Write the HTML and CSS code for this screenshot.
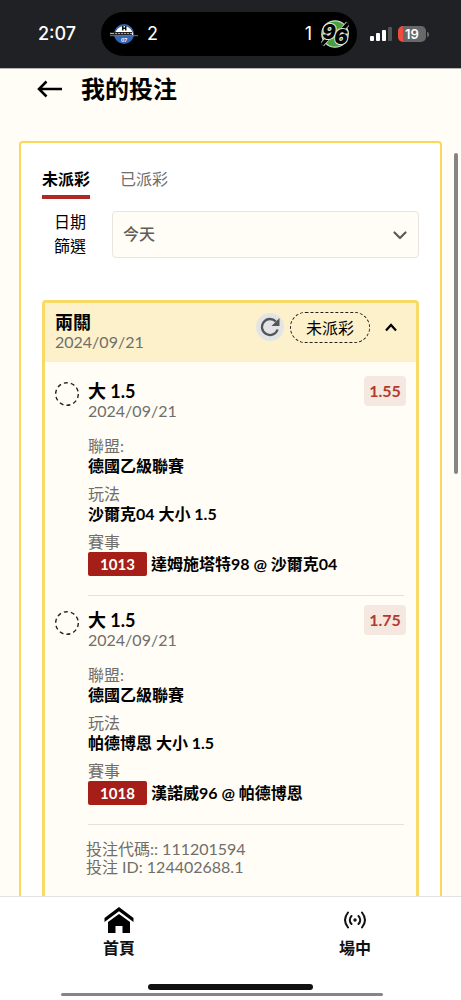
FILE: index.html
```html
<!DOCTYPE html>
<html lang="zh-Hant">
<head>
<meta charset="utf-8">
<meta name="viewport" content="width=device-width, initial-scale=1">
<title>我的投注</title>
<link rel="stylesheet" href="styles.css">
</head>
<body>
<div class="app">
  <div class="status">
    <span class="time">2:07</span>
    <div class="island">
      <svg class="team-home" width="30" height="22" viewBox="0 0 30 22" aria-hidden="true">
        <circle cx="15" cy="11" r="10" fill="#2f66b5"/>
        <path d="M6 12a9 9 0 0 1 18 0z" fill="#fff"/>
        <path d="M13 3h1.500v1.500h1.500v-1.500h1.500v4.500h-1.500v-1.500h-1.500v1.500h-1.500z" fill="#111"/>
        <path d="M1 9h22v3h-22z" fill="#222"/>
        <path d="M1 10.500h4M6 10.500h2M9 10.500h2M12 10.500h2M15 10.500h2M18 10.500h2M21 10.500h2" stroke="#a7a9ad"/>
        <path d="M1 12.700h28" stroke="#777"/>
        <text x="15" y="19" class="crest-year">07</text>
      </svg>
      <span class="score-home">2</span>
      <span class="score-away">1</span>
      <svg width="28" height="28" viewBox="0 0 28 28" aria-hidden="true">
        <circle cx="14" cy="14" r="13.200" fill="#45a03d" stroke="#c9d9c7" stroke-width="1.200"/>
        <path d="M6 19 1 24.500M22 9l5-5.500" stroke="#dfe8dc" stroke-width="5"/>
        <path d="M7 18 1 24.500M21 10l6-6.500" stroke="#000" stroke-width="3.400"/>
        <text x="8" y="19" class="crest-digits">9</text>
        <text x="20" y="24" class="crest-digits">6</text>
      </svg>
    </div>
    <svg class="signal" width="22" height="14" viewBox="0 0 22 14" aria-hidden="true">
      <g fill="#fff"><rect y="9" width="4" height="5" rx="1"/><rect x="6" y="6" width="4" height="8" rx="1"/><rect x="12" y="3" width="4" height="11" rx="1"/></g>
      <rect x="18" width="4" height="14" rx="1" fill="#535456"/>
    </svg>
    <span class="battery">19</span>
    <span class="battery-tip"></span>
  </div>

  <main class="content">
    <header class="page-head">
      <button class="back" type="button" aria-label="返回">
        <svg width="26" height="18" viewBox="0 0 26 18" fill="none" stroke="#000" stroke-width="2.500"><path d="M9.500 1.500 2 9l7.500 7.500M2 9h23"/></svg>
      </button>
      <h1>我的投注</h1>
    </header>

    <section class="panel">
      <div class="tabs" role="tablist">
        <button class="tab active" type="button" role="tab" aria-selected="true">未派彩</button>
        <button class="tab" type="button" role="tab" aria-selected="false">已派彩</button>
      </div>
      <div class="filter">
        <label for="range">日期篩選</label>
        <div class="select-wrap">
          <select id="range"><option>今天</option></select>
          <svg class="caret" width="14" height="9" viewBox="0 0 14 9" fill="none" stroke="#5c5b58" stroke-width="2.200" stroke-linecap="round" stroke-linejoin="round" aria-hidden="true"><path d="M1.500 1.500 7 7l5.500-5.500"/></svg>
        </div>
      </div>

      <article class="slip">
        <header class="slip-head">
          <div class="slip-title">
            <h2>兩關</h2>
            <time>2024/09/21</time>
          </div>
          <button class="refresh" type="button" aria-label="重新整理">
            <svg width="20" height="20" viewBox="0 0 20 20" aria-hidden="true"><path d="M15.800 4.500A8 8 0 1 0 17.600 12.500" fill="none" stroke="#555659" stroke-width="2.300"/><path d="M19.500 1v8h-8z" fill="#555659"/></svg>
          </button>
          <span class="state">未派彩</span>
          <button class="collapse" type="button" aria-label="收合">
            <svg width="12" height="9" viewBox="0 0 12 9" fill="none" stroke="#000" stroke-width="2.200"><path d="M1 7.500 6 2l5 5.500"/></svg>
          </button>
        </header>

        <section class="bet">
          <svg class="ring" width="24" height="24" viewBox="0 0 24 24" aria-hidden="true"><circle cx="12" cy="12" r="11.300"/></svg>
          <div class="bet-body">
            <div class="bet-top">
              <div><h3>大 1.5</h3><time>2024/09/21</time></div>
              <span class="odds">1.55</span>
            </div>
            <dl>
              <div><dt>聯盟:</dt><dd>德國乙級聯賽</dd></div>
              <div><dt>玩法</dt><dd>沙爾克04 大小 1.5</dd></div>
              <div><dt>賽事</dt><dd class="match"><span class="code">1013</span>達姆施塔特98 @ 沙爾克04</dd></div>
            </dl>
          </div>
        </section>

        <section class="bet">
          <svg class="ring" width="24" height="24" viewBox="0 0 24 24" aria-hidden="true"><circle cx="12" cy="12" r="11.300"/></svg>
          <div class="bet-body">
            <div class="bet-top">
              <div><h3>大 1.5</h3><time>2024/09/21</time></div>
              <span class="odds">1.75</span>
            </div>
            <dl>
              <div><dt>聯盟:</dt><dd>德國乙級聯賽</dd></div>
              <div><dt>玩法</dt><dd>帕德博恩 大小 1.5</dd></div>
              <div><dt>賽事</dt><dd class="match"><span class="code">1018</span>漢諾威96 @ 帕德博恩</dd></div>
            </dl>
          </div>
        </section>

        <footer class="ids">
          <p>投注代碼:: 111201594</p>
          <p>投注 ID: 124402688.1</p>
        </footer>
      </article>
    </section>
  </main>

  <nav class="tabbar">
    <a href="#home">
      <svg width="30" height="26" viewBox="0 0 30 26" aria-hidden="true"><path d="M15 0 .5 11v4L15 4.300 29.500 15v-4z"/><path d="M15 7 4 15v11h7.500v-7h7v7H26V15z"/></svg>
      首頁
    </a>
    <a href="#live">
      <svg width="24" height="26" viewBox="0 0 24 26" fill="none" stroke="#111" stroke-width="2" stroke-linecap="round" aria-hidden="true"><circle cx="12" cy="13" r="1.700" fill="#111" stroke="none"/><path d="M8.500 9a5.500 5.500 0 0 0 0 8M15.500 9a5.500 5.500 0 0 1 0 8M5 5.500q-6 7.500 0 15M19 5.500q6 7.500 0 15"/></svg>
      場中
    </a>
  </nav>
  <div class="scroll-y"></div>
  <div class="home-bar"></div>
  <div class="scroll-x"></div>
</div>
</body>
</html>
```
FILE: styles.css
```css
* { box-sizing: border-box; }

body {
  margin: 0;
  background: #fffdf5;
  color: #000;
  font: 16px/20px Lato, "Noto Sans CJK TC", sans-serif;
}

h1, h2, h3, p, dl, dd { margin: 0; }

button {
  padding: 0;
  border: 0;
  background: none;
  color: inherit;
  font: inherit;
}

svg { display: block; flex: none; }

time, dt { display: block; color: #6f6e6b; }

.app {
  position: relative;
  display: flex;
  flex-direction: column;
  height: 100vh;
  overflow: hidden;
}

/* Status bar */
.status {
  display: flex;
  flex: none;
  align-items: center;
  height: 69px;
  padding: 0 32px 0 38px;
  border-bottom: 1px solid #b5b5b3;
  background: #202124;
  color: #fff;
  font-family: Inter, sans-serif;
  font-size: 18px;
}

.time { width: 63px; font-size: 18px; font-weight: 500; }

.island {
  display: flex;
  flex: 1;
  align-items: center;
  height: 44px;
  padding: 0 8px;
  border-radius: 22px;
  background: #000;
}

.score-home { margin-left: 8px; }
.score-away { margin: 0 9px 0 auto; }

.crest-year {
  fill: #fff;
  font: bold 5px Inter, sans-serif;
  text-anchor: middle;
}

.crest-digits {
  fill: #000;
  stroke: #dfe8dc;
  stroke-width: 2px;
  paint-order: stroke;
  font: italic 900 20px Inter, sans-serif;
  text-anchor: middle;
}

.signal { margin: 0 6px 0 13px; }

.battery {
  width: 28px;
  height: 16px;
  border-radius: 5px;
  background: linear-gradient(90deg, #ee4d3e 5px, #67686a 5px);
  font-size: 13px;
  font-weight: 600;
  line-height: 16px;
  text-align: center;
}

.battery-tip {
  width: 2px;
  height: 5px;
  margin-left: 1px;
  border-radius: 0 2px 2px 0;
  background: #67686a;
}

/* Page */
.content { flex: 1; min-height: 0; padding: 0 19px; overflow: hidden; }

.page-head {
  display: flex;
  align-items: center;
  gap: 18px;
  height: 72px;
  padding: 0 18px 32px;
}

h1 { font-size: 24px; font-weight: 700; line-height: 36px; }

.panel {
  padding: 24px 21px;
  border: 2px solid #fad85b;
  border-radius: 4px;
  background: #fff;
}

.tabs { display: flex; gap: 30px; }

.tab {
  padding-bottom: 4px;
  border-bottom: 4px solid transparent;
  color: #6f6e6b;
  line-height: 24px;
}

.tab.active { border-color: #b02822; color: #000; font-weight: 700; }

.filter {
  display: flex;
  align-items: center;
  gap: 26px;
  margin: 11px 0 42px;
  padding-left: 12px;
}

.filter label { width: 32px; flex: none; line-height: 24px; }

.select-wrap { position: relative; flex: 1; }

select {
  display: block;
  width: 100%;
  height: 47px;
  padding: 0 10px;
  border: 1px solid #e8e5df;
  border-radius: 4px;
  background: #fffdf5;
  color: #5f5e5b;
  font: inherit;
  font-weight: 500;
  appearance: none;
}

.caret { position: absolute; top: 20px; right: 12px; pointer-events: none; }

/* Bet slip */
.slip {
  border: 3px solid #f9da66;
  border-radius: 4px;
  background: #fffdf5;
}

.slip-head {
  display: flex;
  align-items: flex-start;
  height: 59px;
  padding: 9px 19px 0 10px;
  background: #fcf1cb;
}

.slip-title { flex: 1; }

h2, h3 { font-size: 18px; font-weight: 700; line-height: 20px; }

.refresh {
  display: grid;
  place-items: center;
  width: 28px;
  height: 28px;
  margin: 1px 6px 0 0;
  border-radius: 50%;
  background: #e3e4e6;
}

.state {
  padding: 0 15px;
  border: 1px dashed #222;
  border-radius: 16px;
  line-height: 29px;
}

.collapse { margin: 11px 0 0 15px; }

.bet { display: flex; gap: 9px; padding: 14px 12px 0 10px; }
.slip-head + .bet { padding-top: 19px; }

.ring { margin-top: 1px; fill: none; stroke: #222; stroke-width: 1.4; stroke-dasharray: 4 3.1; }

.bet-body { flex: 1; padding-bottom: 19px; border-bottom: 1px solid #e5e2dd; }

.bet-top { display: flex; justify-content: space-between; margin-bottom: 15px; }

.odds {
  width: 42px;
  height: 30px;
  margin: -5px -2px 0 0;
  border-radius: 4px;
  background: #f5e8e1;
  color: #b23a2e;
  font-weight: 700;
  line-height: 30px;
  text-align: center;
}

dl { display: grid; gap: 8px; }
dd { font-weight: 700; }

.match { display: flex; align-items: center; gap: 4px; line-height: 24px; }

.code {
  width: 59px;
  border-radius: 2px;
  background: #a51f18;
  color: #fff;
  font-size: 15px;
  text-align: center;
}

.ids { padding: 15px 41px 30px; color: #6f6e6b; line-height: 18px; }

/* Bottom navigation */
.tabbar {
  display: flex;
  flex: none;
  gap: 2px;
  height: 104px;
  padding: 10px 0 0 2px;
  overflow: hidden;
  border-top: 1px solid #e3e3e3;
  background: #fff;
}

.tabbar a {
  display: flex;
  flex: 0 0 51%;
  flex-direction: column;
  align-items: center;
  gap: 5px;
  color: #111;
  font-weight: 700;
  text-decoration: none;
}

/* Overlaid scroll and home indicators */
.scroll-y, .scroll-x, .home-bar { position: absolute; border-radius: 3px; }
.scroll-y { top: 153px; right: 3px; width: 4px; height: 321px; background: #858585; }
.scroll-x { right: 17%; bottom: 4px; left: 61px; height: 3px; background: #858585; }
.home-bar { right: 32%; bottom: 10px; left: 32%; height: 6px; background: #111; }
```
